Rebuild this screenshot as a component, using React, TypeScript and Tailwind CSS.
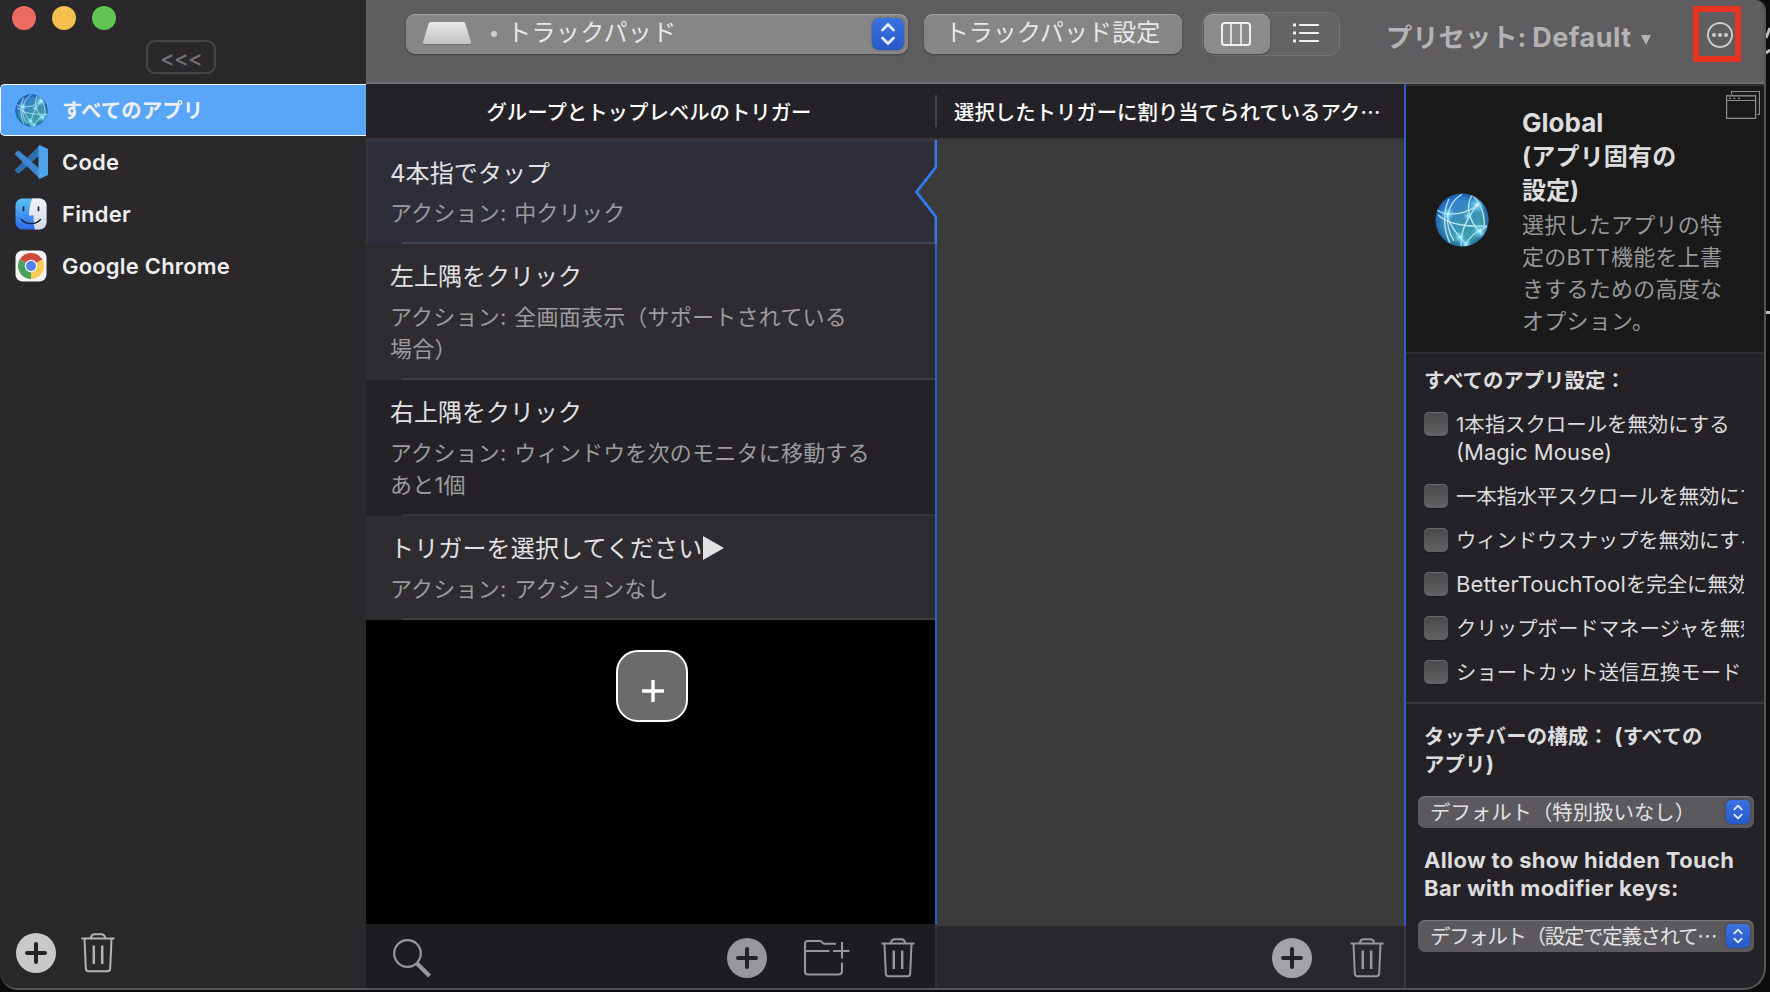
import React from "react";

const globeArcs = [
  "M2 17C12 24 32 22 45 10",
  "M3 22C14 32 32 34 52 33",
  "M27 1C10 12 9 32 19 48",
  "M14 6C8 18 8 36 15 50",
  "M37 2C30 14 34 28 47 42",
  "M42 12C32 26 26 36 26 53",
  "M12 23C16 34 22 42 30 50",
  "M37 2C48 12 50 24 49 36",
  "M52 34C40 38 34 44 30 53",
];

function Globe({ className }: { className: string }) {
  return (
    <svg viewBox="0 0 54 54" className={className}>
      <defs>
        <linearGradient id="globeFill" x1="0" y1="0" x2="0.6" y2="1">
          <stop offset="0" stopColor="#2f74de" />
          <stop offset="0.55" stopColor="#3a8fb8" />
          <stop offset="1" stopColor="#3fa6a6" />
        </linearGradient>
        <radialGradient id="globeShade">
          <stop offset="0.75" stopColor="#0a3f9a" stopOpacity="0" />
          <stop offset="1" stopColor="#0a3f9a" stopOpacity="0.6" />
        </radialGradient>
        <radialGradient id="globeGlow">
          <stop offset="0" stopColor="#f0ffff" />
          <stop offset="0.3" stopColor="#8fe6ff" stopOpacity="0.7" />
          <stop offset="1" stopColor="#5fd0ff" stopOpacity="0" />
        </radialGradient>
        <clipPath id="globeClip">
          <circle cx="27" cy="27" r="26.5" />
        </clipPath>
      </defs>
      <g clipPath="url(#globeClip)">
        <rect width="54" height="54" fill="url(#globeFill)" />
        <circle cx="27" cy="27" r="27" fill="url(#globeShade)" />
        <g fill="none" stroke="#d9f6fb" strokeWidth="1.3" opacity="0.85">
          {globeArcs.map((d) => (
            <path key={d} d={d} />
          ))}
        </g>
        <circle cx="13" cy="21" r="7" fill="url(#globeGlow)" />
        <circle cx="42" cy="12" r="9" fill="url(#globeGlow)" />
        <circle cx="33" cy="23" r="5" fill="url(#globeGlow)" />
        <circle cx="45" cy="38" r="8" fill="url(#globeGlow)" />
        <circle cx="25" cy="44" r="6" fill="url(#globeGlow)" />
        <circle cx="31" cy="51" r="6" fill="url(#globeGlow)" />
      </g>
    </svg>
  );
}

function CodeIcon() {
  return (
    <svg viewBox="0 0 34 34" className="ml-px size-[34px] shrink-0">
      <path d="M24.5.5.4 24.2c-.5.6-.5 1.300 0 1.900l2 1.800c.6.5 1.300.5 1.900.1L25 10z" fill="#2f6fb0" />
      <path d="M24.500 33.500.4 9.800c-.5-.6-.5-1.300 0-1.900l2-1.800c.6-.5 1.300-.5 1.900-.1L25 24z" fill="#3c87cf" />
      <path d="M25 .3 33 4v26l-8 3.700c-1 .3-1.500-.3-1.500-1V1.300c0-.8.600-1.300 1.500-1z" fill="#4ea3ea" />
    </svg>
  );
}

function FinderIcon() {
  return (
    <svg viewBox="0 0 32 32" className="size-8">
      <defs>
        <linearGradient id="finderBlue" x1="0" y1="0" x2="0" y2="1">
          <stop offset="0" stopColor="#5cc3f7" />
          <stop offset="1" stopColor="#2e68ea" />
        </linearGradient>
        <linearGradient id="finderWhite" x1="0" y1="0" x2="0" y2="1">
          <stop offset="0" stopColor="#f4f4f6" />
          <stop offset="1" stopColor="#d3d9e4" />
        </linearGradient>
        <clipPath id="finderClip">
          <rect x="0.500" y="0.500" width="31" height="31" rx="7" />
        </clipPath>
      </defs>
      <g clipPath="url(#finderClip)">
        <rect width="32" height="32" fill="url(#finderBlue)" />
        <path d="M17.500 0C15 6 14 12 14 17.500h4.500c0 5 .3 10 1.500 14.500h12V0z" fill="url(#finderWhite)" />
        <path d="M8.500 9v3.500M23.500 9v3.500" stroke="#16222e" strokeWidth="1.700" strokeLinecap="round" />
        <path d="M6.500 21.500c5 5.500 14 5.500 19 0" fill="none" stroke="#16222e" strokeWidth="1.400" strokeLinecap="round" />
      </g>
    </svg>
  );
}

function ChromeIcon() {
  return (
    <svg viewBox="0 0 32 32" className="size-8">
      <rect x="0.500" y="0.500" width="31" height="31" rx="7" fill="#f4f4f4" />
      <path d="M16 16 4.740 9.500A13 13 0 0 1 27.260 9.500z" fill="#cf4a3c" />
      <path d="M16 16 27.260 9.500A13 13 0 0 1 16 29z" fill="#f9cd55" />
      <path d="M16 16 16 29A13 13 0 0 1 4.740 9.500z" fill="#4b9f5f" />
      <path d="M16 9.800h11.400a13 13 0 0 0-.6-1.200H16z" fill="#cf4a3c" />
      <path d="M21.400 19.100 15.700 29h1.500z" fill="#f9cd55" />
      <path d="m10.600 19.100-5.700-9.900-.7 1.500z" fill="#4b9f5f" />
      <circle cx="16" cy="16" r="6.200" fill="#f4f4f4" />
      <circle cx="16" cy="16" r="4.900" fill="#4f82ec" />
    </svg>
  );
}

function PlusCircle({ className }: { className: string }) {
  return (
    <svg viewBox="0 0 40 40" className={`size-10 shrink-0 ${className}`}>
      <circle cx="20" cy="20" r="20" fill="currentColor" />
      <path d="M20 11v18M11 20h18" stroke="#242226" strokeWidth="4" strokeLinecap="round" />
    </svg>
  );
}

function Trash({ className }: { className: string }) {
  return (
    <svg viewBox="0 0 34 40" className={`h-10 w-[34px] shrink-0 ${className}`} fill="none" stroke="currentColor" strokeWidth="2">
      <path d="M.500 5.500h33" strokeWidth="2.200" />
      <path d="M9.800 5c.5-2.500 1.500-3.800 3.500-3.800h7.400c2 0 3 1.300 3.500 3.800" />
      <path d="m3.500 6 1.300 29.500c.1 1.700 1 2.700 2.600 2.700h19.200c1.600 0 2.500-1 2.600-2.700L30.500 6" />
      <path d="M12.800 12.500v18.500M21.200 12.500v18.500" strokeWidth="2.500" />
    </svg>
  );
}

function SearchIcon() {
  return (
    <svg viewBox="0 0 40 40" className="size-10 text-[#98969a]" fill="none" stroke="currentColor">
      <circle cx="15.500" cy="15.500" r="13.300" strokeWidth="2.200" />
      <path d="m25 25.500 12.500 12.500" strokeWidth="4.200" />
    </svg>
  );
}

function FolderPlus() {
  return (
    <svg viewBox="0 0 48 38" className="h-[38px] w-12 text-[#98969a]" fill="none" stroke="currentColor" strokeWidth="2.100">
      <path d="M33 4.800H21c-1.500 0-2.200-2.800-3.800-2.800H4.500C3 2 2 3 2 4.500v28C2 34.500 3 35.500 5 35.500h30c2.500 0 4-1 4-3.500v-8.500" />
      <path d="M2 12h24.500M30 12h16.500M39 3v16.500" />
    </svg>
  );
}

function Stepper({ className, icon }: { className: string; icon: string }) {
  return (
    <span className={`flex shrink-0 items-center justify-center bg-gradient-to-b from-[#3a72e2] to-[#2659c8] shadow-[0_0_2px_rgba(0,0,0,0.5)] ${className}`}>
      <svg viewBox="0 0 14 24" className={icon} fill="none" stroke="#e6ecf8" strokeWidth="2.800" strokeLinecap="round" strokeLinejoin="round">
        <path d="m1.500 8 5.500-5.500L12.500 8M1.500 16l5.500 5.500 5.500-5.500" />
      </svg>
    </span>
  );
}

function AppRow({ icon, name, label }: { icon: React.ReactNode; name: string; label?: string }) {
  return (
    <div className="flex h-[52px] items-center pl-[14px]">
      <span className="flex w-[34px] justify-center">{icon}</span>
      <span className={`ml-[14px] font-semibold text-[#eeeeef] ${label ?? "text-[22px] tracking-[0.2px]"}`}>{name}</span>
    </div>
  );
}

type Trigger = { title: string; lines: string[]; row: string; line: string; shift?: string; arrow?: boolean };

const triggers: Trigger[] = [
  { title: "4本指でタップ", lines: ["アクション: 中クリック"], row: "h-[104px] bg-[#2e2e38] shadow-[inset_2px_2px_0_#31353f]", line: "bg-[#414550]", shift: "mt-px tracking-[0.1px]" },
  { title: "左上隅をクリック", lines: ["アクション: 全画面表示（サポートされている", "場合）"], row: "h-[136px] bg-[#2e2c31]", line: "bg-[#3f3d42]" },
  { title: "右上隅をクリック", lines: ["アクション: ウィンドウを次のモニタに移動する", "あと1個"], row: "h-[136px] bg-[#242227]", line: "bg-[#353338]" },
  { title: "トリガーを選択してください", lines: ["アクション: アクションなし"], row: "h-[104px] bg-[#2e2c31]", line: "bg-[#3f3d42]", shift: "tracking-[0.15px]", arrow: true },
];

function TriggerRow({ t }: { t: Trigger }) {
  return (
    <div className={`flex flex-col ${t.row}`}>
      <div className="flex-1 pt-[15px] pl-6">
        <div className="flex h-9 items-center text-[24px] leading-9 whitespace-nowrap text-[#e2e1e3]">
          <span className={t.shift}>{t.title}</span>
          {t.arrow && (
            <svg viewBox="0 0 20 24" className="-mt-[3px] h-6 w-[21px]" preserveAspectRatio="none" fill="#e2e1e3">
              <path d="M0 0 20 12 0 24z" />
            </svg>
          )}
        </div>
        <div className="mt-[6px] text-[22px] leading-8 tracking-[0.22px] whitespace-nowrap text-[#9c9b9f] [word-spacing:1.3px]">
          {t.lines.map((l) => (
            <div key={l}>{l}</div>
          ))}
        </div>
      </div>
      <div className={`ml-9 h-[2px] ${t.line}`} />
    </div>
  );
}

const options: { id: string; label: React.ReactNode }[] = [
  {
    id: "scroll",
    label: (
      <>
        <div>1本指スクロールを無効にする</div>
        <div className="-mt-px mb-px text-[22px]">(Magic Mouse)</div>
      </>
    ),
  },
  { id: "horizontal", label: <div className="tracking-[-0.15px]">一本指水平スクロールを無効にする</div> },
  { id: "snap", label: <div className="tracking-[-0.15px]">ウィンドウスナップを無効にする</div> },
  {
    id: "disable",
    label: (
      <div className="-mt-px mb-px">
        <span className="text-[22px] tracking-[0.15px]">BetterTouchTool</span>を完全に無効にする
      </div>
    ),
  },
  { id: "clipboard", label: <div>クリップボードマネージャを無効にする</div> },
  { id: "shortcut", label: <div>ショートカット送信互換モード</div> },
];

function SmallSelect({ label, text }: { label: string; text: string }) {
  return (
    <div className="flex h-8 w-[336px] items-center justify-between rounded-[7px] bg-[#5b595d] pr-1 pl-3 shadow-[inset_0_1px_0_#7a787c]">
      <span className={`text-[20.400px] leading-8 whitespace-nowrap text-[#e2e1e3] ${text}`}>{label}</span>
      <Stepper className="size-6 rounded-[5px]" icon="h-4 w-[10px]" />
    </div>
  );
}

export default function App() {
  return (
    <div className="relative h-[992px] w-[1770px] overflow-hidden bg-[#0c0c0c] font-[Inter,'Noto_Sans_CJK_JP',sans-serif]">
      <div className="flex h-[990px] w-[1766px] overflow-hidden rounded-br-[22px] rounded-bl-[18px] rounded-tr-[10px] border-r-2 border-b-2 border-[#555357] bg-[#242227]">
        <aside className="flex w-[366px] shrink-0 flex-col bg-[#2a282b]">
          <div className="flex h-[40px] gap-4 pt-[6px] pl-3">
            <span className="size-6 rounded-full bg-[#ec6a5e]" />
            <span className="size-6 rounded-full bg-[#f4bf4f]" />
            <span className="size-6 rounded-full bg-[#61c554]" />
          </div>
          <div className="ml-[146px] flex h-[34px] w-[70px] items-center justify-center rounded-[9px] border-2 border-[#474548] pt-[2px] text-[22px] leading-none font-medium tracking-[-0.7px] text-[#727074]">
            &lt;&lt;&lt;
          </div>
          <div className="mt-[10px] h-[52px] rounded-l-[5px] border border-r-0 border-white bg-[#58a6f9]">
            <div className="-mt-px -ml-px">
              <AppRow icon={<Globe className="size-[33px]" />} name="すべてのアプリ" label="mt-[2px] text-[20.4px] tracking-[0.1px] font-bold" />
            </div>
          </div>
          <AppRow icon={<CodeIcon />} name="Code" />
          <AppRow icon={<FinderIcon />} name="Finder" />
          <AppRow icon={<ChromeIcon />} name="Google Chrome" />
          <div className="mt-auto mb-[15px] flex items-center gap-6 pl-4">
            <PlusCircle className="text-[#c8c8c8]" />
            <Trash className="ml-px text-[#b4b3b5]" />
          </div>
        </aside>

        <div className="flex min-w-0 flex-1 flex-col">
          <header className="flex h-[84px] shrink-0 items-start border-b-2 border-[#6f6d70] bg-[#5f5d60] pt-3">
            <div className="mt-[2px] ml-10 flex h-10 w-[502px] items-center rounded-[9px] bg-[#868687] pr-1 pl-4 shadow-[0_1px_2px_rgba(0,0,0,0.35),inset_0_1px_0_#a3a2a4]">
              <svg viewBox="0 0 50 26" className="-mt-[2px] h-[26px] w-[50px]">
                <defs>
                  <linearGradient id="pad" x1="0" y1="0" x2="0" y2="1">
                    <stop offset="0" stopColor="#e9e9e9" />
                    <stop offset="1" stopColor="#c2c2c2" />
                  </linearGradient>
                </defs>
                <path d="M9 3h32q2 0 2.500 2L49 23q.5 2-1.500 2h-45Q.5 25 1 23L6.500 5Q7 3 9 3z" fill="#6f6f70" />
                <path d="M9 2h32q2 0 2.500 2L49 22q.5 2-1.500 2h-45Q.5 24 1 22L6.500 4Q7 2 9 2z" fill="url(#pad)" />
              </svg>
              <span className="ml-[19px] size-[6px] rounded-full bg-[#cfcfd0]" />
              <span className="-mt-[2px] ml-[10px] flex-1 text-[24px] leading-9 tracking-[0.4px] whitespace-nowrap text-[#e9e8ea]">トラックパッド</span>
              <Stepper className="size-8 rounded-[7px]" icon="h-6 w-[14px]" />
            </div>
            <div className="mt-[2px] ml-4 flex h-10 w-[258px] items-center justify-center rounded-[9px] bg-[#868687] shadow-[0_1px_2px_rgba(0,0,0,0.35),inset_0_1px_0_#a3a2a4]">
              <span className="-mt-[2px] -ml-px text-[24px] leading-9 tracking-[0.1px] whitespace-nowrap text-[#e9e8ea]">トラックパッド設定</span>
            </div>
            <div className="ml-5 flex h-11 w-[138px] rounded-[11px] border border-[#757376] bg-[#656366] p-px">
              <div className="flex h-10 w-[66px] items-center justify-center rounded-[9px] bg-[#8b8a8c] shadow-[0_1px_2px_rgba(0,0,0,0.35),inset_0_1px_0_#a3a2a4]">
                <svg viewBox="0 0 30 24" className="-mt-[1px] -ml-[2px] h-6 w-[30px]" fill="none" stroke="#f0f0f0" strokeWidth="2">
                  <rect x="1" y="1" width="28" height="22" rx="2.500" />
                  <path d="M10 1v22M20 1v22" strokeWidth="1.600" />
                </svg>
              </div>
              <div className="flex flex-1 items-center justify-center">
                <svg viewBox="0 0 26 20" className="-mt-[2px] ml-[3px] h-5 w-[26px]" fill="none" stroke="#f0f0f0" strokeWidth="2">
                  <path d="M7 2h18M7 10h18M7 18h18" strokeLinecap="round" />
                  <path d="M0 2h3M0 10h3M0 18h3" strokeWidth="3" />
                </svg>
              </div>
            </div>
            <div className="mt-[7px] ml-[46px] flex h-[38px] w-[308px] items-center text-[26.3px] font-bold whitespace-nowrap text-[#b3b2b4]">
              <span>プリセット: </span>
              <span className="ml-[6px] text-[27px] tracking-[0.5px]">Default</span>
              <svg viewBox="0 0 10 10" className="mt-[4px] ml-[9px] size-[10px]" fill="#b3b2b4">
                <path d="M0 0h10L5 10z" />
              </svg>
            </div>
            <div className="-mt-[6px] -ml-px flex h-14 w-12 items-center justify-center border-6 border-[#e83323]">
              <svg viewBox="0 0 26 26" className="mt-[2px] ml-[5px] size-[26px] shrink-0" fill="none" stroke="#cbcacc" strokeWidth="1.900">
                <circle cx="13" cy="13" r="12" />
                <g fill="#cbcacc" stroke="none">
                  <circle cx="7" cy="13" r="2" />
                  <circle cx="13" cy="13" r="2" />
                  <circle cx="19" cy="13" r="2" />
                </g>
              </svg>
            </div>
          </header>

          <div className="flex min-h-0 flex-1">
            <div className="flex w-[1038px] shrink-0 flex-col">
              <div className="flex h-14 shrink-0 items-center border-b-2 border-[#39373b] font-['Noto_Sans_CJK_JP',sans-serif] text-[20.400px] font-medium whitespace-nowrap text-white">
                <div className="w-[569px] pr-[3px] text-center">グループとトップレベルのトリガー</div>
                <div className="h-8 w-[2px] bg-[#444246]" />
                <div className="pl-[17px]">選択したトリガーに割り当てられているアク…</div>
              </div>
              <div className="flex min-h-0 flex-1">
                <div className="relative flex w-[571px] flex-col">
                  <div className="flex h-[784px] flex-col border-r-2 border-[#285fcb] bg-black">
                    {triggers.map((t) => (
                      <TriggerRow key={t.title} t={t} />
                    ))}
                    <div className="mt-[30px] ml-[250px] flex size-[72px] items-center justify-center rounded-[22px] border-2 border-white bg-[#6b6b69]">
                      <svg viewBox="0 0 22 22" className="mt-[10px] ml-[2px] size-[22px]" stroke="#fff" strokeWidth="3.400">
                        <path d="M11 0v22M0 11h22" />
                      </svg>
                    </div>
                  </div>
                  <svg viewBox="0 0 24 104" className="absolute top-0 right-0 h-[104px] w-6">
                    <path d="M24 26 3 52l21 26z" fill="#3b3b3b" />
                    <path d="M23 0v27L3.500 52 23 77v27" fill="none" stroke="#3478f6" strokeWidth="2.800" />
                  </svg>
                  <div className="flex flex-1 items-center border-r-2 border-[#333136] bg-[#1e1c20] pr-5 pl-[26px] pt-[3px]">
                    <SearchIcon />
                    <PlusCircle className="ml-auto text-[#98969a]" />
                    <span className="ml-9">
                      <FolderPlus />
                    </span>
                    <Trash className="ml-[30px] text-[#98969a]" />
                  </div>
                </div>
                <div className="flex flex-1 flex-col">
                  <div className="h-[786px] bg-[#3b3b3b]" />
                  <div className="flex flex-1 items-center justify-end gap-[38px] bg-[#29272b] pt-px pr-5">
                    <PlusCircle className="text-[#a4a2a6]" />
                    <Trash className="text-[#98969a]" />
                  </div>
                </div>
              </div>
            </div>
            <div className="flex w-[2px] shrink-0 flex-col">
              <div className="h-[842px] bg-[#285fcb]" />
              <div className="flex-1 bg-[#3c3a3e]" />
            </div>

            <aside className="flex min-w-0 flex-1 flex-col overflow-hidden text-[#dddcde]">
              <section className="flex h-[270px] shrink-0 border-t-2 border-b-2 border-[#323035] bg-[#1a1a1a]">
                <Globe className="mt-[107px] ml-[29px] size-[54px] shrink-0" />
                <div className="mt-[20px] ml-[33px] w-[204px] shrink-0 whitespace-nowrap">
                  <div className="text-[24px] leading-[34px] font-bold">
                    <div className="h-[34px] text-[26px]">Global</div>
                    <div className="tracking-[0.2px]">(アプリ固有の</div>
                    <div>設定)</div>
                  </div>
                  <div className="mt-px text-[22px] leading-8 tracking-[0.25px] text-[#98979a]">
                    <div>選択したアプリの特</div>
                    <div>
                      定の<span className="tracking-[1px]">BTT</span>機能を上書
                    </div>
                    <div>きするための高度な</div>
                    <div>オプション。</div>
                  </div>
                </div>
                <svg viewBox="0 0 34 28" className="mt-[5px] h-7 w-[34px] shrink-0" fill="none" stroke="#8f8e90" strokeWidth="1.200">
                  <path d="M5.500 3.500v-3h28v23h-3" />
                  <path d="M.600 4.600h29v22.800h-29zM.600 9.500h29" />
                  <path d="M1 5.300h28" stroke="#5a595b" />
                  <path d="M3 7.300h2M7.500 7.300h2M12 7.300h2" />
                </svg>
              </section>
              <section className="h-[350px] shrink-0 border-b-2 border-[#39373b] pt-[13px] pl-[18px]">
                <div className="text-[20.400px] leading-7 font-bold">すべてのアプリ設定：</div>
                <div className="mt-[16px] flex flex-col gap-4">
                  {options.map((o) => (
                    <div key={o.id} className="flex">
                      <span className="mt-px size-6 shrink-0 rounded-[5px] bg-gradient-to-b from-[#4a484b] to-[#646265] shadow-[0_1px_1px_rgba(0,0,0,0.3),inset_0_1px_0_#6b696c]" />
                      <div className="ml-2 flex w-[288px] flex-col overflow-hidden text-[20.400px] leading-7 whitespace-nowrap [&>div]:h-7">{o.label}</div>
                    </div>
                  ))}
                </div>
              </section>
              <section className="pt-[18px] pl-3">
                <div className="pl-[6px] text-[20.400px] leading-7 font-bold tracking-[0.15px] whitespace-nowrap [&>div]:h-7">
                  <div>
                    タッチバーの構成：<span className="text-[22px]"> (</span>すべての
                  </div>
                  <div>
                    アプリ<span className="text-[22px]">)</span>
                  </div>
                </div>
                <div className="mt-[18px]">
                  <SmallSelect label="デフォルト（特別扱いなし）" text="mt-px" />
                </div>
                <div className="mt-[18px] pl-[6px] text-[22px] leading-7 font-bold tracking-[0.35px] whitespace-nowrap">
                  <div>Allow to show hidden Touch</div>
                  <div>Bar with modifier keys:</div>
                </div>
                <div className="mt-[18px] font-['Noto_Sans_CJK_JP',sans-serif]">
                  <SmallSelect label="デフォルト（設定で定義されて…" text="-mt-[2px] tracking-[-1.25px]" />
                </div>
              </section>
            </aside>
          </div>
        </div>
      </div>
      <svg viewBox="0 0 4 320" className="absolute top-0 right-0 h-80 w-1" fill="none" stroke="#bdbdbd" strokeWidth="3">
        <path d="M0 38 4 28M0 53 4 50M0 312.500h4" />
      </svg>
    </div>
  );
}
